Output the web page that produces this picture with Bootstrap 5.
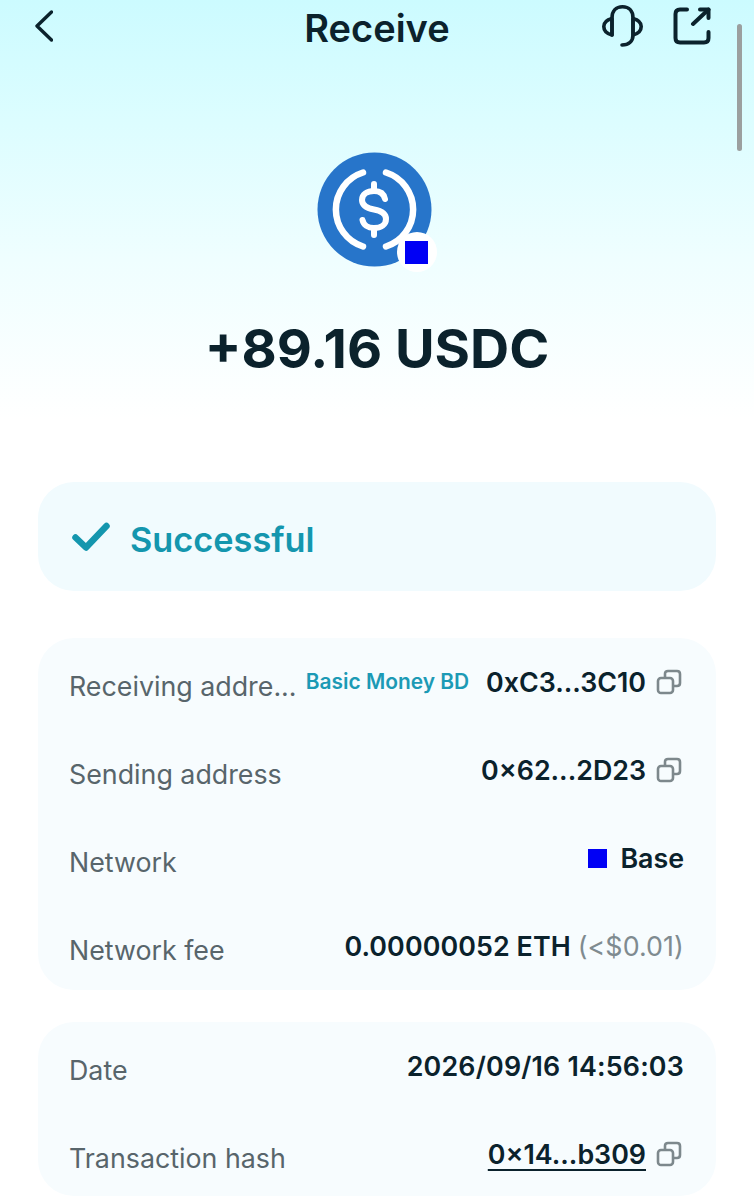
<!DOCTYPE html>
<html lang="en">
<head>
  <meta charset="UTF-8" />
  <meta name="viewport" content="width=device-width, initial-scale=1" />
  <title>Receive</title>
  <link href="https://cdn.jsdelivr.net/npm/bootstrap@5.3.3/dist/css/bootstrap.min.css" rel="stylesheet" />
  <style>
    html, body { height: 1200px; overflow: hidden; }
    body {
      font-family: Inter, "Liberation Sans", sans-serif;
      color: #0b222c;
      background: linear-gradient(180deg, #ccfbff 0, #dcfdff 120px, #effeff 260px, #ffffff 420px) no-repeat;
    }
    .top-bar { height: 56px; padding: 0 43px 0 35px; }
    .top-title { font-size: 38px; font-weight: 600; line-height: 56px; }
    .top-left { width: 120px; padding-bottom: 4px; }
    .top-right { width: 112px; padding-bottom: 4px; gap: 29px; }
    .coin-wrap { width: 115px; height: 115px; margin: 96px 6px 0 0; }
    .chain-badge {
      position: absolute; right: -5px; bottom: -5px;
      width: 40px; height: 40px; border-radius: 50%;
      background: #fff;
    }
    .chain-square { width: 23px; height: 23px; background: #0000f5; }
    .amount-text { font-size: 54.2px; font-weight: 700; line-height: 62px; margin-top: 50px; }
    .status-box {
      height: 109px; margin: 103px 38px 0; padding: 0 34px;
      background: #f1fbfe; border-radius: 36px;
      color: #1496ae; font-size: 34.300px; font-weight: 600;
    }
    .status-check { margin-right: 20px; }
    .status-text { padding-top: 6px; }
    .info-box {
      margin: 0 38px; padding: 0 32px 0 31px;
      background: #f7fcfe; border-radius: 36px;
    }
    .info-first { margin-top: 47px; height: 352px; padding-top: 4px; }
    .info-second { margin-top: 32px; height: 174px; padding-top: 4px; }
    .info-line { height: 88px; }
    .info-label { font-size: 26.800px; color: #58656b; white-space: nowrap; }
    .info-value { font-size: 26.800px; font-weight: 600; white-space: nowrap; position: relative; top: -4px; }
    .date-value { letter-spacing: .2px; }
    .fee-value { letter-spacing: .1px; }
    .alias-text { font-size: 20.900px; font-weight: 600; color: #1c9ab5; margin-right: 17px; position: relative; top: 0; }
    .copy-icon { width: 26px; height: 26px; margin: 0 2px 0 10px; }
    .net-dot { width: 19px; height: 19px; background: #0000f5; margin-right: 13px; }
    .fee-extra { font-weight: 400; color: #7f8b90; }
    .hash-link { color: inherit; text-decoration: underline; text-underline-offset: 5px; }
    .scroll-thumb {
      position: absolute; left: 737px; top: 24px;
      width: 5px; height: 127px; border-radius: 3px; background: #9b9f9f;
    }
  </style>
</head>
<body class="position-relative">

  <!-- Header -->
  <div class="top-bar d-flex align-items-center justify-content-between">
    <div class="top-left d-flex align-items-center">
      <svg width="18" height="32" viewBox="0 0 18 32" fill="none" stroke="#0b222c" stroke-width="3.400" stroke-linecap="round" stroke-linejoin="round"><path d="M16.500 2 2 16 16.500 30"/></svg>
    </div>
    <div class="top-title">Receive</div>
    <div class="top-right d-flex justify-content-end align-items-center">
      <svg width="42" height="42" viewBox="0 0 42 42" fill="none" stroke="#0b222c" stroke-width="3.600" stroke-linecap="round" stroke-linejoin="round">
        <path d="M10 30V13C10 6 14 1.800 20.500 1.800S31 6 31 13v17c0 6-4 10-11 10"/>
        <path d="M10 13.500C4.500 15 1.800 18 1.800 21.500S4.500 28.500 10 30z"/>
        <path d="M31 13.500c5.500 1.500 8.200 4.500 8.200 8s-2.700 7-8.200 8.500z"/>
      </svg>
      <svg width="38" height="38" viewBox="0 0 38 38" fill="none" stroke="#0b222c" stroke-width="4" stroke-linecap="round" stroke-linejoin="round">
        <path d="M14 2.500H7C4 2.500 2.500 4 2.500 7v24c0 3 1.500 4.500 4.500 4.500h24c3 0 4.500-1.500 4.500-4.500v-6"/>
        <path d="M35.500 2.500 20 17"/>
        <path d="M27 2.500h8.500V11"/>
      </svg>
    </div>
  </div>

  <!-- Coin and amount -->
  <div class="d-flex flex-column align-items-center">
    <div class="coin-wrap position-relative">
      <svg width="115" height="115" viewBox="0 0 115 115">
        <circle cx="57.500" cy="57.500" r="57" fill="#2775ca"/>
        <g fill="none" stroke="#fff" stroke-width="6.500" stroke-linecap="round">
          <path d="M46 20.500A38.800 38.800 0 0 0 46 94.500"/>
          <path d="M69 20.500A38.800 38.800 0 0 1 69 94.500"/>
        </g>
        <g fill="none" stroke="#fff" stroke-width="6" stroke-linecap="round" stroke-linejoin="round">
          <path d="M68 47c-1-5-5-8-11-8-7 0-12 3.500-12 9 0 5 4 8 12 9.500 8 1.500 12 4.500 12 9.500 0 5.500-5 9-12 9-6 0-10.500-3-11.500-8"/>
          <path d="M57 32v7M57 76v7"/>
        </g>
      </svg>
      <div class="chain-badge d-flex align-items-center justify-content-center"><div class="chain-square"></div></div>
    </div>
    <div class="amount-text">+89.16 USDC</div>
  </div>

  <!-- Status -->
  <div class="status-box d-flex align-items-center">
    <svg class="status-check" width="38" height="30" viewBox="0 0 38 30" fill="none" stroke="#1496ae" stroke-width="6.500" stroke-linecap="round" stroke-linejoin="round"><path d="M3.500 15.500 14 25.500 34.500 4"/></svg>
    <span class="status-text">Successful</span>
  </div>

  <!-- Address details -->
  <div class="info-box info-first">
    <div class="info-line d-flex align-items-center justify-content-between">
      <div class="info-label">Receiving addre...</div>
      <div class="info-value d-flex align-items-center">
        <span class="alias-text">Basic Money BD</span>0xC3...3C10
        <svg class="copy-icon" viewBox="0 0 26 26" fill="none" stroke="#7d888c" stroke-width="2.600" stroke-linejoin="round"><rect x="2" y="9" width="15" height="15" rx="3"/><path d="M9 9V5c0-2 1-3 3-3h9c2 0 3 1 3 3v9c0 2-1 3-3 3h-4"/></svg>
      </div>
    </div>
    <div class="info-line d-flex align-items-center justify-content-between">
      <div class="info-label">Sending address</div>
      <div class="info-value d-flex align-items-center">0×62...2D23
        <svg class="copy-icon" viewBox="0 0 26 26" fill="none" stroke="#7d888c" stroke-width="2.600" stroke-linejoin="round"><rect x="2" y="9" width="15" height="15" rx="3"/><path d="M9 9V5c0-2 1-3 3-3h9c2 0 3 1 3 3v9c0 2-1 3-3 3h-4"/></svg>
      </div>
    </div>
    <div class="info-line d-flex align-items-center justify-content-between">
      <div class="info-label">Network</div>
      <div class="info-value d-flex align-items-center"><span class="net-dot"></span>Base</div>
    </div>
    <div class="info-line d-flex align-items-center justify-content-between">
      <div class="info-label">Network fee</div>
      <div class="info-value fee-value">0.00000052 ETH <span class="fee-extra">(&lt;$0.01)</span></div>
    </div>
  </div>

  <!-- Date and hash -->
  <div class="info-box info-second">
    <div class="info-line d-flex align-items-center justify-content-between">
      <div class="info-label">Date</div>
      <div class="info-value date-value">2026/09/16 14:56:03</div>
    </div>
    <div class="info-line d-flex align-items-center justify-content-between">
      <div class="info-label">Transaction hash</div>
      <div class="info-value d-flex align-items-center"><a class="hash-link" href="#">0×14...b309</a>
        <svg class="copy-icon" viewBox="0 0 26 26" fill="none" stroke="#7d888c" stroke-width="2.600" stroke-linejoin="round"><rect x="2" y="9" width="15" height="15" rx="3"/><path d="M9 9V5c0-2 1-3 3-3h9c2 0 3 1 3 3v9c0 2-1 3-3 3h-4"/></svg>
      </div>
    </div>
  </div>

  <div class="scroll-thumb"></div>

  <script src="https://cdn.jsdelivr.net/npm/bootstrap@5.3.3/dist/js/bootstrap.bundle.min.js"></script>
</body>
</html>
